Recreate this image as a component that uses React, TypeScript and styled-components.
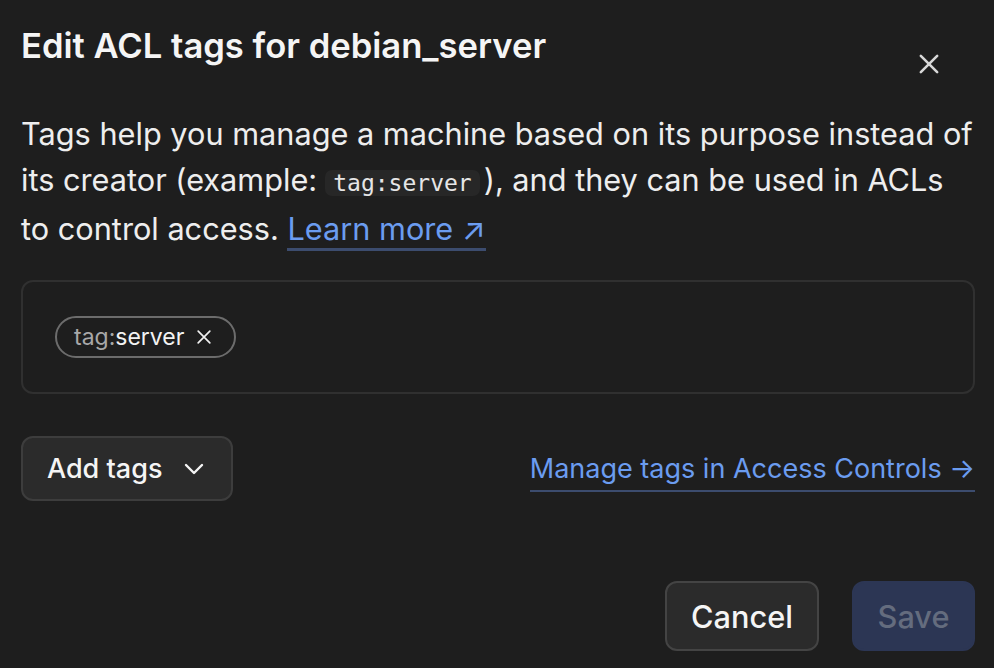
import React from "react";
import styled, { createGlobalStyle } from "styled-components";

const GlobalStyle = createGlobalStyle`
  html, body {
    margin: 0;
    padding: 0;
    background: #1e1e1e;
  }
  body {
    font-family: Inter, "Noto Sans", sans-serif;
    color: #f2f2f2;
  }
`;

const Dialog = styled.div`
  width: 994px;
  height: 668px;
  box-sizing: border-box;
  padding: 23px 19px 0 21px;
  background: #1e1e1e;
  display: flex;
  flex-direction: column;
  overflow: hidden;
`;

const Header = styled.div`
  display: flex;
  justify-content: space-between;
  align-items: flex-start;
`;

const Title = styled.h2`
  margin: 0;
  font-size: 34.6px;
  line-height: 44px;
  font-weight: 600;
  color: #f5f5f5;
`;

const CloseButton = styled.button`
  width: 40px;
  height: 40px;
  margin: 21px 26px 0 0;
  padding: 0;
  border: none;
  background: transparent;
  color: #d8d8d8;
  display: flex;
  align-items: center;
  justify-content: center;
  cursor: pointer;
`;

const Description = styled.p`
  margin: 27px 0 0;
  font-size: 30.7px;
  line-height: 46px;
  color: #eeeeee;
`;

const Code = styled.code`
  font-family: "DejaVu Sans Mono", "Liberation Mono", monospace;
  font-size: 23px;
  background: #272727;
  color: #e6e6e6;
  border-radius: 7px;
  padding: 0 8px;
  margin: 0 4px 0 8px;
`;

const Link = styled.a`
  color: #6b9cf0;
  text-decoration: none;
  border-bottom: 3px solid #3c4c6e;
  padding-bottom: 1px;
  cursor: pointer;
`;

const TagBox = styled.div`
  margin-top: 28px;
  height: 114px;
  box-sizing: border-box;
  border: 2px solid #303030;
  border-radius: 12px;
  padding: 34px 32px;
  display: flex;
  align-items: flex-start;
  gap: 10px;
`;

const Tag = styled.span`
  display: inline-flex;
  align-items: center;
  gap: 10px;
  height: 42px;
  box-sizing: border-box;
  padding: 0 20px 0 17px;
  border: 2px solid #6c6c6c;
  border-radius: 21px;
  font-size: 23px;
  color: #f2f2f2;
`;

const TagPrefix = styled.span`
  color: #a8a8a8;
`;

const ActionRow = styled.div`
  margin-top: 42px;
  display: flex;
  justify-content: space-between;
  align-items: center;
`;

const Button = styled.button<{ $primary?: boolean }>`
  height: 70px;
  box-sizing: border-box;
  border-radius: 12px;
  font-family: Inter, "Noto Sans", sans-serif;
  font-size: 30.7px;
  font-weight: 500;
  display: inline-flex;
  align-items: center;
  justify-content: center;
  gap: 22px;
  cursor: pointer;
  border: 2px solid ${(p) => (p.$primary ? "#2c3654" : "#444444")};
  background: ${(p) => (p.$primary ? "#2c3654" : "#2b2b2b")};
  color: ${(p) => (p.$primary ? "#646c7e" : "#f5f5f5")};
`;

const DropdownButton = styled(Button)`
  height: 65px;
  padding: 0 27px 0 24px;
  font-size: 27px;
  border-color: #3d3d3d;
`;

const ManageLink = styled(Link)`
  font-size: 27px;
  line-height: 36px;
  border-bottom-width: 2px;
  padding-bottom: 3px;
  margin-top: 6px;
  display: inline-flex;
  align-items: center;
  gap: 8px;
`;

const Footer = styled.div`
  margin-top: auto;
  margin-bottom: 17px;
  display: flex;
  justify-content: flex-end;
  gap: 33px;
`;

const CancelButton = styled(Button)`
  width: 154px;
`;

const SaveButton = styled(Button)`
  width: 123px;
`;

const XIcon = ({ size, stroke }: { size: number; stroke: number }) => (
  <svg width={size} height={size} viewBox="0 0 24 24" fill="none" stroke="currentColor" strokeWidth={stroke} strokeLinecap="round">
    <path d="M5 5l14 14M19 5L5 19" />
  </svg>
);

const ChevronDown = () => (
  <svg width="20" height="12" viewBox="0 0 20 12" fill="none" stroke="currentColor" strokeWidth="2.4" strokeLinecap="round" strokeLinejoin="round">
    <path d="M2 2l8 8 8-8" />
  </svg>
);

export default function App() {
  return (
    <>
      <GlobalStyle />
      <Dialog>
        <Header>
          <Title>Edit ACL tags for debian_server</Title>
          <CloseButton aria-label="Close">
            <XIcon size={28} stroke={2.2} />
          </CloseButton>
        </Header>
        <Description>
          Tags help you manage a machine based on its purpose instead of its creator (example:
          <Code>tag:server</Code>), and they can be used in ACLs to{"\u00a0"}control access.{" "}
          <Link>Learn more ↗</Link>
        </Description>
        <TagBox>
          <Tag>
            <span>
              <TagPrefix>tag:</TagPrefix>server
            </span>
            <XIcon size={20} stroke={2} />
          </Tag>
        </TagBox>
        <ActionRow>
          <DropdownButton>
            Add tags
            <ChevronDown />
          </DropdownButton>
          <ManageLink>Manage tags in Access Controls →</ManageLink>
        </ActionRow>
        <Footer>
          <CancelButton>Cancel</CancelButton>
          <SaveButton $primary>Save</SaveButton>
        </Footer>
      </Dialog>
    </>
  );
}
